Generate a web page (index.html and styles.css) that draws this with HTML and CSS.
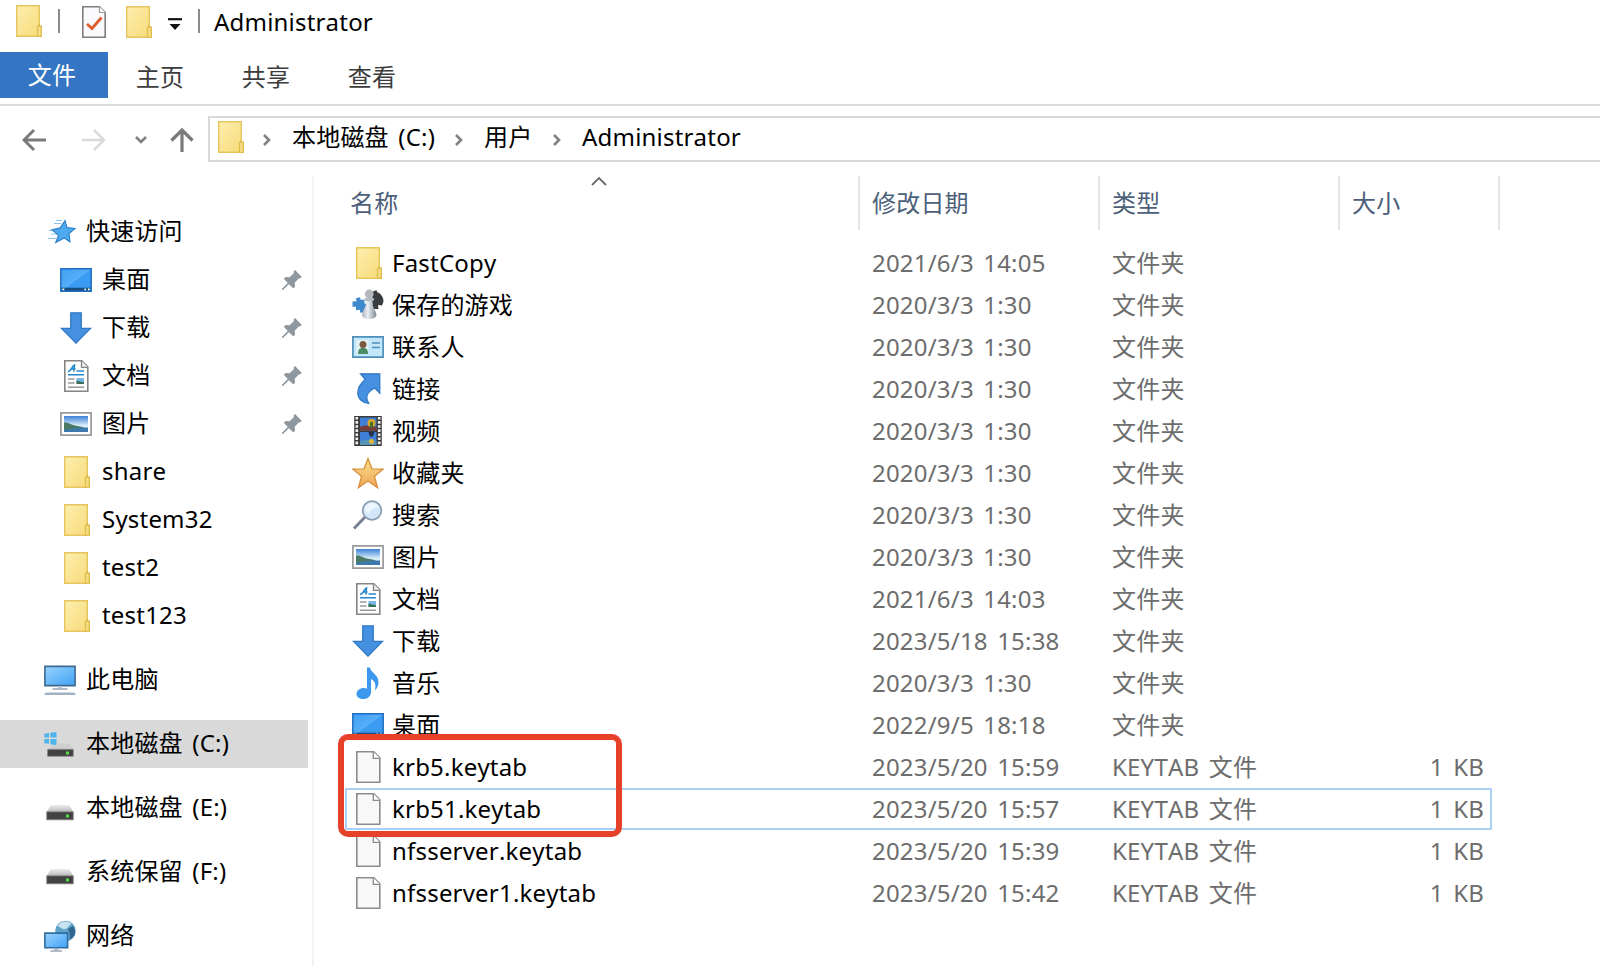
FILE: index.html
```html
<!DOCTYPE html>
<html lang="zh-CN">
<head>
    <meta charset="UTF-8">
    <meta name="viewport" content="width=device-width, initial-scale=1.0">
    <title>Administrator</title>
    <link rel="stylesheet" href="styles.css">
</head>
<body>
    <!-- Icon set -->
    <svg class="sprite" xmlns="http://www.w3.org/2000/svg">
        <defs>
            <linearGradient id="gFolder" x1="0" y1="0" x2="1" y2="1">
                <stop offset="0" stop-color="#fdeeae"/><stop offset="1" stop-color="#f7db78"/>
            </linearGradient>
            <linearGradient id="gBlue" x1="0" y1="0" x2="1" y2="1">
                <stop offset="0" stop-color="#3f9df2"/><stop offset=".5" stop-color="#55aef9"/><stop offset=".52" stop-color="#3c9bf3"/><stop offset="1" stop-color="#3a98f0"/>
            </linearGradient>
            <linearGradient id="gScreen" x1="0" y1="0" x2="1" y2="1">
                <stop offset="0" stop-color="#9ad2fc"/><stop offset="1" stop-color="#3fa3f5"/>
            </linearGradient>
            <linearGradient id="gStar" x1="0" y1="0" x2="0" y2="1">
                <stop offset="0" stop-color="#f9e08a"/><stop offset="1" stop-color="#f0a55a"/>
            </linearGradient>
            <linearGradient id="gDisk" x1="0" y1="0" x2="0" y2="1">
                <stop offset="0" stop-color="#ececec"/><stop offset="1" stop-color="#b9b9b9"/>
            </linearGradient>
            <linearGradient id="gPhoto" x1="0" y1="0" x2="0" y2="1">
                <stop offset="0" stop-color="#3f82d8"/><stop offset=".6" stop-color="#d9effb"/><stop offset="1" stop-color="#d9effb"/>
            </linearGradient>
            <linearGradient id="gPawn" x1="0" y1="0" x2="1" y2="0">
                <stop offset="0" stop-color="#a9b1ba"/><stop offset=".4" stop-color="#eceff2"/><stop offset="1" stop-color="#7f8a96"/>
            </linearGradient>
        </defs>
        <symbol id="folder" viewBox="0 0 32 32">
            <path d="M4.7.7h22.6v20.6h2v10H4.7z" fill="url(#gFolder)" stroke="#e5c65e" stroke-width="1.4"/>
            <path d="M25.5 31.3v-9l1.8-3.3v2.3h2v10z" fill="#f6de86" stroke="#dfbc4c" stroke-width="1.3"/>
        </symbol>
        <symbol id="check" viewBox="0 0 32 32">
            <path d="M4.8.8h16.7l5.7 5.7v24.7H4.8z" fill="#fafafc" stroke="#7d7d7d" stroke-width="1.6"/>
            <path d="M21.5.8v5.7h5.7" fill="#fff" stroke="#9a9a9a" stroke-width="1.2"/>
            <path d="M9 18l5 4.5 9.5-11" fill="none" stroke="#dd5f2c" stroke-width="2.8"/>
        </symbol>
        <symbol id="star-blue" viewBox="0 0 32 32">
            <path d="M12 4.5h6M10 7.5h7M5 14.5h6M7 18h6M4 22.5h8" stroke="#8cc4ee" stroke-width="1.2"/>
            <path d="M21 4.6l2 7 8.2.9-6.2 5 1 8.3-5.8-3.8-8.5 4.6 2.8-7.5L8 13.7l8.2-1.8z" fill="#4eaaf0" stroke="#2b7fc4" stroke-width="1.1"/>
        </symbol>
        <symbol id="desktop" viewBox="0 0 32 32">
            <path d="M.8 4.8h30.4v22.4H.8z" fill="url(#gBlue)" stroke="#1f6fbd" stroke-width="1.5"/>
            <path d="M1.5 23.7h29v3h-29z" fill="#174f85"/>
            <path d="M2.5 24.6h1.8v1.6H2.5zM24.5 24.6h1.6v1.6h-1.6zM28 24.6h1.8v1.6H28z" fill="#fff"/>
        </symbol>
        <symbol id="download" viewBox="0 0 32 32">
            <path d="M10.7.8h10.6v15.5h9.3L16 31.2 1.4 16.3h9.3z" fill="#4590e0" stroke="#2f76c4" stroke-width="1.2"/>
        </symbol>
        <symbol id="document" viewBox="0 0 32 32">
            <path d="M4.8.8h17l6 6v24.4h-23z" fill="#fdfdfd" stroke="#858585" stroke-width="1.6"/>
            <path d="M21.5.8v6.5h6.3" fill="#eee" stroke="#858585" stroke-width="1.3"/>
            <path d="M8 11.5c4-.5 4-6 6.5-6.500l-.6 6.500M10.5 9h5M16.5 11h7.500M8 14.800h16" fill="none" stroke="#2388cf" stroke-width="1.6"/>
            <path d="M8 19h6.500M8 23h6.500M8 27.300h16" stroke="#9a9a9a" stroke-width="1.4"/>
            <path d="M16.500 18H24v6h-7.500z" fill="#78b7e4"/>
            <path d="M16.500 20.500l3.500 1 4 .8V24h-7.500z" fill="#3b6e56"/>
        </symbol>
        <symbol id="picture" viewBox="0 0 32 32">
            <path d="M.9 4.900h30.200v22.200H.9z" fill="#fff" stroke="#9b9b9b" stroke-width="1.7"/>
            <path d="M4 8h24v16H4z" fill="url(#gPhoto)"/>
            <path d="M4 14.500c4-.6 6 1.500 9 2.500 4 1.400 8 1 11 2.500L14 22l-10 1z" fill="#4a7a63"/>
            <path d="M4 21.500c8-.5 14-2.500 24-2V24H4z" fill="#3d79ad"/>
        </symbol>
        <symbol id="pin" viewBox="0 0 22 22">
            <path d="M14 1l7 7-2 1.500-1-.3-4.300 4.600.4 4.200-2 1.200-4.200-4L2 21H1v-1.200L6.800 14 3 10l1.300-1.900 4.400.2L13 4l-.5-1.500z" fill="#8f989e"/>
        </symbol>
        <symbol id="pc" viewBox="0 0 32 32">
            <path d="M.9 2.400h30.200v19.200H.9z" fill="url(#gScreen)" stroke="#3d6a90" stroke-width="1.6"/>
            <path d="M14 22.500h4v2h-4z" fill="#c4ccd4"/>
            <path d="M8.500 25h15" stroke="#8fa0b0" stroke-width="1.4"/>
            <path d="M2 28.500h28l2 2.500H0z" fill="#a3b2c2"/>
        </symbol>
        <symbol id="disk" viewBox="0 0 32 32">
            <path d="M7 13h18l4.500 7h-27z" fill="url(#gDisk)"/>
            <path d="M2.700 19.800h26.600v8H2.700z" fill="#424242" stroke="#8a8a8a" stroke-width=".8"/>
            <circle cx="23.500" cy="24" r="1.700" fill="#5be04b"/>
        </symbol>
        <symbol id="disk-sys" viewBox="0 0 32 32">
            <path d="M14 15.500h11l4.500 6h-26l4-4h6.500z" fill="#cfcfcf"/>
            <path d="M3.500 21.300h25.800v7H3.500z" fill="#424242" stroke="#8a8a8a" stroke-width=".8"/>
            <circle cx="23.500" cy="25" r="1.700" fill="#5be04b"/>
            <path d="M.3 5.700l4.700-.7v4.500H.3zM6.400 4.800l6.100-.9v5.600H6.400zM.3 11h4.700v4.800l-4.700-.6zM6.400 11h6.100v6.200l-6.100-1z" fill="#4db4ec"/>
        </symbol>
        <symbol id="network" viewBox="0 0 32 32">
            <circle cx="21.500" cy="11" r="10.300" fill="#5fa2c9"/>
            <path d="M13.500 6c3-5 10-6 14-2-3 1-3 4-6 5s-5-2-8-3z" fill="#c9e2ef"/>
            <path d="M24 9l5-3c2 3 3 7 1 10l-4 4c-1-3 1-5-2-11z" fill="#2d678f"/>
            <path d="M.9 13.100h22.700v14.600H.9z" fill="url(#gScreen)" stroke="#2f6d9e" stroke-width="1.6"/>
            <path d="M10 28.500h4.500v1.500H10z" fill="#aab6c0"/><path d="M6.500 31h11.500" stroke="#8fa0b0" stroke-width="1.4"/>
        </symbol>
        <symbol id="games" viewBox="0 0 32 32">
            <path d="M20 3l4.500-2 .5 2c4 1.500 6.500 5 6.500 9.500l-1.500 4-4-.5.5 4h-6z" fill="#3a3d40"/>
            <path d="M.5 12.500l4-.3-.5-3 4-1 .6 2.600h3.900v4l2.500-.2v4.600l-2.700.2v3.900l-4 .4-.4-3-3.900.6-.2-3.600H.5z" fill="#4089cc"/>
            <path d="M14.500 9h5.500c.2 6 1 9 2.800 12 1.700 3 2 5 1.200 6.500-1 1.700-3.500 2.500-6.800 2.500s-5.700-.8-6.700-2.500c-.8-1.500-.5-3.500 1.200-6.500 1.800-3 2.600-6 2.800-12z" fill="url(#gPawn)"/>
            <ellipse cx="17.200" cy="10.300" rx="5" ry="1.900" fill="#b4bbc3"/>
            <circle cx="17.200" cy="5" r="4.400" fill="#b2b8be"/>
        </symbol>
        <symbol id="contact" viewBox="0 0 32 32">
            <path d="M.9 5.900h30.200v20.200H.9z" fill="#c4e6fa" stroke="#4f90ba" stroke-width="1.7"/>
            <path d="M4.500 9h12v14h-12z" fill="#e3f2f4"/>
            <path d="M6 23c0-4.500 1.500-6 5-6s5 1.500 5 6z" fill="#4b8b65"/>
            <circle cx="11" cy="13.500" r="3.500" fill="#7c5843"/>
            <path d="M20 12h8M20 16.500h8" stroke="#4f90ba" stroke-width="1.6"/>
        </symbol>
        <symbol id="link" viewBox="0 0 32 32">
            <path d="M8.500.8h19.300v19.400l-5-5.200c-5.500 3-8.300 6-8 9.500.1 2 .8 4 2 6-6-.8-11-4.500-11-10.500 0-5.200 2.500-9.500 7.500-13.500z" fill="#4590e0" stroke="#2f76c4" stroke-width="1.2"/>
        </symbol>
        <symbol id="video" viewBox="0 0 32 32">
            <path d="M2.200 1h27.600v30H2.200z" fill="#3b3b3b"/>
            <path d="M4.800 2v28M27.200 2v28" stroke="#f2f2f2" stroke-width="2.600" stroke-dasharray="2.600 1.500"/>
            <path d="M8 2.500h16.500v13H8zM8 17h16.500v13H8z" fill="#3f7fd6"/>
            <path d="M8 12c4-2 9-2 16.500 0v3.500H8z" fill="#7a3b36"/>
            <circle cx="19.500" cy="8" r="4" fill="#d7a92b"/><path d="M18 7h3v6h-3z" fill="#4c6d27"/>
            <path d="M16.500 17h6l-2 5-3-1z" fill="#26324e"/><path d="M8 27c5-3 11-3 16.500-1v4H8z" fill="#5596b8"/><circle cx="19.500" cy="26.500" r="2.500" fill="#e2b63b"/>
        </symbol>
        <symbol id="star-gold" viewBox="0 0 32 32">
            <path d="M16 1.500l4 10.300 11 .4-8.600 7 3.200 11.500L16 24l-9.600 6.700 3.200-11.500-8.600-7 11-.4z" fill="url(#gStar)" stroke="#d98f3c" stroke-width="1.3"/>
        </symbol>
        <symbol id="search" viewBox="0 0 32 32">
            <path d="M2 29.500l11.500-12" stroke="#77828e" stroke-width="3"/>
            <circle cx="20" cy="11.500" r="9.300" fill="#d3e9fb" stroke="#8a9cae" stroke-width="1.7"/>
            <path d="M13 11c0-4 3-7 7-7 3.500 0 6 2 6.800 4.500-4 0-8 1-10 6-2-.5-3.800-1.500-3.800-3.500z" fill="#ecf6fe"/>
        </symbol>
        <symbol id="music" viewBox="0 0 32 32">
            <path d="M15 .5h3c.5 5 8.500 7 8.500 14.500 0 3-1 6-3.500 8.500 1-6 .5-9-4-11.500V25c0 4-3 7-7.500 7-4 0-7-2-7-5 0-3.500 3.500-6 7.500-6 1.200 0 2.200.3 3 .8z" fill="#3b98ee"/>
        </symbol>
        <symbol id="file" viewBox="0 0 32 32">
            <path d="M4.800.8h17l6 6v24.400h-23z" fill="#f8f8f9" stroke="#8b8b8b" stroke-width="1.6"/>
            <path d="M21.300.8v6.500h6.500" fill="#fff" stroke="#8b8b8b" stroke-width="1.3"/>
        </symbol>
    </svg>

    <div class="explorer">
        <div class="titlebar">
            <svg class="icon"><use href="#folder"/></svg>
            <span class="separator"></span>
            <svg class="icon quick-check"><use href="#check"/></svg>
            <svg class="icon quick-folder"><use href="#folder"/></svg>
            <svg class="quick-more" viewBox="0 0 14 13"><path d="M0 1.200h14" stroke="#111" stroke-width="2.200"/><path d="M1.500 6h11L7 12z" fill="#111"/></svg>
            <span class="separator title-separator"></span>
            <span class="title">Administrator</span>
        </div>

        <div class="tabs">
            <div class="tab active">文件</div>
            <div class="tab">主页</div>
            <div class="tab">共享</div>
            <div class="tab">查看</div>
        </div>

        <div class="navbar">
            <div class="nav-buttons">
                <svg class="back" viewBox="0 0 24 24"><path d="M24 12H2M12 2L2 12l10 10" fill="none" stroke="#7a7a7a" stroke-width="3"/></svg>
                <svg class="forward" viewBox="0 0 24 24"><path d="M0 12h22M12 2l10 10-10 10" fill="none" stroke="#dadada" stroke-width="2.6"/></svg>
                <svg class="recent" viewBox="0 0 12 8"><path d="M1 1l5 5 5-5" fill="none" stroke="#808080" stroke-width="2.6"/></svg>
                <svg class="up" viewBox="0 0 24 24"><path d="M12 24V2M1.500 12.500L12 2l10.500 10.500" fill="none" stroke="#7a7a7a" stroke-width="3.2"/></svg>
            </div>
            <div class="address">
                <svg class="icon"><use href="#folder"/></svg>
                <svg class="chevron" viewBox="0 0 8 12"><path d="M1 1l5 5-5 5" fill="none" stroke="#808080" stroke-width="2.6"/></svg>
                <span class="crumb crumb-drive">本地磁盘 (C:)</span>
                <svg class="chevron" viewBox="0 0 8 12"><path d="M1 1l5 5-5 5" fill="none" stroke="#808080" stroke-width="2.6"/></svg>
                <span class="crumb crumb-users">用户</span>
                <svg class="chevron" viewBox="0 0 8 12"><path d="M1 1l5 5-5 5" fill="none" stroke="#808080" stroke-width="2.6"/></svg>
                <span class="crumb">Administrator</span>
            </div>
        </div>

        <div class="content">
            <div class="sidebar">
                <div class="item"><svg class="icon"><use href="#star-blue"/></svg><span>快速访问</span></div>
                <div class="item child"><svg class="icon"><use href="#desktop"/></svg><span>桌面</span><svg class="pin"><use href="#pin"/></svg></div>
                <div class="item child"><svg class="icon"><use href="#download"/></svg><span>下载</span><svg class="pin"><use href="#pin"/></svg></div>
                <div class="item child"><svg class="icon"><use href="#document"/></svg><span>文档</span><svg class="pin"><use href="#pin"/></svg></div>
                <div class="item child"><svg class="icon"><use href="#picture"/></svg><span>图片</span><svg class="pin"><use href="#pin"/></svg></div>
                <div class="item child"><svg class="icon"><use href="#folder"/></svg><span>share</span></div>
                <div class="item child"><svg class="icon"><use href="#folder"/></svg><span>System32</span></div>
                <div class="item child"><svg class="icon"><use href="#folder"/></svg><span>test2</span></div>
                <div class="item child"><svg class="icon"><use href="#folder"/></svg><span>test123</span></div>
                <div class="item root"><svg class="icon"><use href="#pc"/></svg><span>此电脑</span></div>
                <div class="item root selected"><svg class="icon"><use href="#disk-sys"/></svg><span>本地磁盘 (C:)</span></div>
                <div class="item root"><svg class="icon"><use href="#disk"/></svg><span>本地磁盘 (E:)</span></div>
                <div class="item root"><svg class="icon"><use href="#disk"/></svg><span>系统保留 (F:)</span></div>
                <div class="item root"><svg class="icon"><use href="#network"/></svg><span>网络</span></div>
            </div>

            <div class="files">
                <div class="columns">
                    <div class="column">名称<svg class="sort" viewBox="0 0 16 10"><path d="M1 9l7-7 7 7" fill="none" stroke="#6a6a6a" stroke-width="1.8"/></svg></div>
                    <div class="column">修改日期</div>
                    <div class="column">类型</div>
                    <div class="column">大小</div>
                </div>
                <div class="row"><div class="name"><svg class="icon"><use href="#folder"/></svg>FastCopy</div><div>2021/6/3 14:05</div><div>文件夹</div><div class="size"></div></div>
                <div class="row"><div class="name"><svg class="icon"><use href="#games"/></svg>保存的游戏</div><div>2020/3/3 1:30</div><div>文件夹</div><div class="size"></div></div>
                <div class="row"><div class="name"><svg class="icon"><use href="#contact"/></svg>联系人</div><div>2020/3/3 1:30</div><div>文件夹</div><div class="size"></div></div>
                <div class="row"><div class="name"><svg class="icon"><use href="#link"/></svg>链接</div><div>2020/3/3 1:30</div><div>文件夹</div><div class="size"></div></div>
                <div class="row"><div class="name"><svg class="icon"><use href="#video"/></svg>视频</div><div>2020/3/3 1:30</div><div>文件夹</div><div class="size"></div></div>
                <div class="row"><div class="name"><svg class="icon"><use href="#star-gold"/></svg>收藏夹</div><div>2020/3/3 1:30</div><div>文件夹</div><div class="size"></div></div>
                <div class="row"><div class="name"><svg class="icon"><use href="#search"/></svg>搜索</div><div>2020/3/3 1:30</div><div>文件夹</div><div class="size"></div></div>
                <div class="row"><div class="name"><svg class="icon"><use href="#picture"/></svg>图片</div><div>2020/3/3 1:30</div><div>文件夹</div><div class="size"></div></div>
                <div class="row"><div class="name"><svg class="icon"><use href="#document"/></svg>文档</div><div>2021/6/3 14:03</div><div>文件夹</div><div class="size"></div></div>
                <div class="row"><div class="name"><svg class="icon"><use href="#download"/></svg>下载</div><div>2023/5/18 15:38</div><div>文件夹</div><div class="size"></div></div>
                <div class="row"><div class="name"><svg class="icon"><use href="#music"/></svg>音乐</div><div>2020/3/3 1:30</div><div>文件夹</div><div class="size"></div></div>
                <div class="row"><div class="name"><svg class="icon"><use href="#desktop"/></svg>桌面</div><div>2022/9/5 18:18</div><div>文件夹</div><div class="size"></div></div>
                <div class="row"><div class="name"><svg class="icon"><use href="#file"/></svg>krb5.keytab</div><div>2023/5/20 15:59</div><div>KEYTAB 文件</div><div class="size">1 KB</div></div>
                <div class="row focused"><div class="name"><svg class="icon"><use href="#file"/></svg>krb51.keytab</div><div>2023/5/20 15:57</div><div>KEYTAB 文件</div><div class="size">1 KB</div></div>
                <div class="row"><div class="name"><svg class="icon"><use href="#file"/></svg>nfsserver.keytab</div><div>2023/5/20 15:39</div><div>KEYTAB 文件</div><div class="size">1 KB</div></div>
                <div class="row"><div class="name"><svg class="icon"><use href="#file"/></svg>nfsserver1.keytab</div><div>2023/5/20 15:42</div><div>KEYTAB 文件</div><div class="size">1 KB</div></div>
                <div class="highlight"></div>
            </div>
        </div>
    </div>
</body>
</html>
```
FILE: styles.css
```css
* {
    box-sizing: border-box;
}
body {
    margin: 0;
    font-family: 'Noto Sans', 'Noto Sans CJK SC', sans-serif;
    font-size: 24px;
    line-height: 36px;
    letter-spacing: 0.2px;
    word-spacing: 3px;
    font-kerning: none;
    color: #000;
    background: #fff;
    overflow: hidden;
}
.sprite {
    position: absolute;
    width: 0;
    height: 0;
}
.icon {
    width: 32px;
    height: 32px;
    flex-shrink: 0;
}
.explorer {
    height: 966px;
    display: flex;
    flex-direction: column;
    white-space: nowrap;
}

/* title bar */
.titlebar {
    height: 52px;
    display: flex;
    align-items: center;
    padding: 0 0 10px 12px;
}
.separator {
    width: 2px;
    height: 24px;
    background: #8c8c8c;
    margin-left: 14px;
}
.quick-check {
    margin: 2px 0 0 18px;
}
.quick-folder {
    margin: 2px 0 0 12px;
}
.quick-more {
    width: 14px;
    height: 13px;
    margin: 6px 0 0 14px;
}
.title-separator {
    margin-left: 16px;
}
.title {
    margin: 1px 0 0 14px;
}

/* ribbon tabs */
.tabs {
    height: 54px;
    display: flex;
    border-bottom: 2px solid #dadbdc;
}
.tab {
    width: 106px;
    height: 46px;
    line-height: 50px;
    padding-right: 2px;
    text-align: center;
    color: #3c3c3c;
}
.tab.active {
    width: 108px;
    line-height: 46px;
    padding-right: 4px;
    background: #3576c4;
    color: #fff;
}

/* navigation and address */
.navbar {
    height: 70px;
    display: flex;
    padding-top: 10px;
}
.nav-buttons {
    width: 208px;
    height: 46px;
    display: flex;
    align-items: center;
    padding: 2px 0 0 22px;
}
.back,
.forward,
.up {
    width: 24px;
    height: 24px;
}
.forward {
    margin-left: 36px;
}
.recent {
    width: 12px;
    height: 8px;
    margin-left: 29px;
}
.up {
    margin-left: 23px;
}
.address {
    flex: 1;
    height: 46px;
    display: flex;
    align-items: center;
    padding-left: 4px;
    border: 2px solid #d9d9d9;
    border-right: none;
}
.address .icon {
    margin-bottom: 4px;
}
.chevron {
    width: 8px;
    height: 12px;
    margin: 2px 21px 0 17px;
}
.crumb {
    margin-bottom: 4px;
}
.crumb-drive {
    width: 146px;
}
.crumb-users {
    width: 52px;
}

/* main area */
.content {
    flex: 1;
    display: flex;
}
.sidebar {
    width: 314px;
    padding: 32px 4px 0 0;
    border-right: 2px solid #f3f3f3;
}
.item {
    height: 48px;
    display: flex;
    align-items: center;
    padding-left: 44px;
}
.item span {
    margin: 0 0 2px 10px;
}
.item.child {
    padding-left: 60px;
}
.item.root {
    margin-top: 16px;
}
.item.selected {
    background: #d9d9d9;
}
.pin {
    width: 22px;
    height: 22px;
    margin: 0 5px 0 auto;
}

.files {
    position: relative;
    padding-left: 31px;
}
.columns {
    height: 66px;
    display: flex;
    color: #4c607a;
}
.column {
    position: relative;
    width: 240px;
    height: 54px;
    padding-left: 12px;
    line-height: 54px;
    border-right: 2px solid #e4e4e4;
}
.column:first-child {
    width: 515px;
    padding-left: 5px;
}
.column:last-child {
    width: 160px;
}
.sort {
    position: absolute;
    top: 0;
    left: 246px;
    width: 16px;
    height: 10px;
}
.row {
    width: 1147px;
    height: 42px;
    display: grid;
    grid-template-columns: 527px 240px 240px 132px;
    align-items: center;
    color: #6d6d6d;
}
.row.focused {
    box-shadow: inset 0 0 0 2px #abd0f8;
}
.name {
    display: flex;
    align-items: center;
    gap: 8px;
    padding-left: 7px;
    color: #000;
}
.size {
    text-align: right;
}
/* marker around the two krb files */
.highlight {
    position: absolute;
    top: 558px;
    left: 24px;
    width: 284px;
    height: 103px;
    border: 6px solid #e8412a;
    border-radius: 10px;
}
```
